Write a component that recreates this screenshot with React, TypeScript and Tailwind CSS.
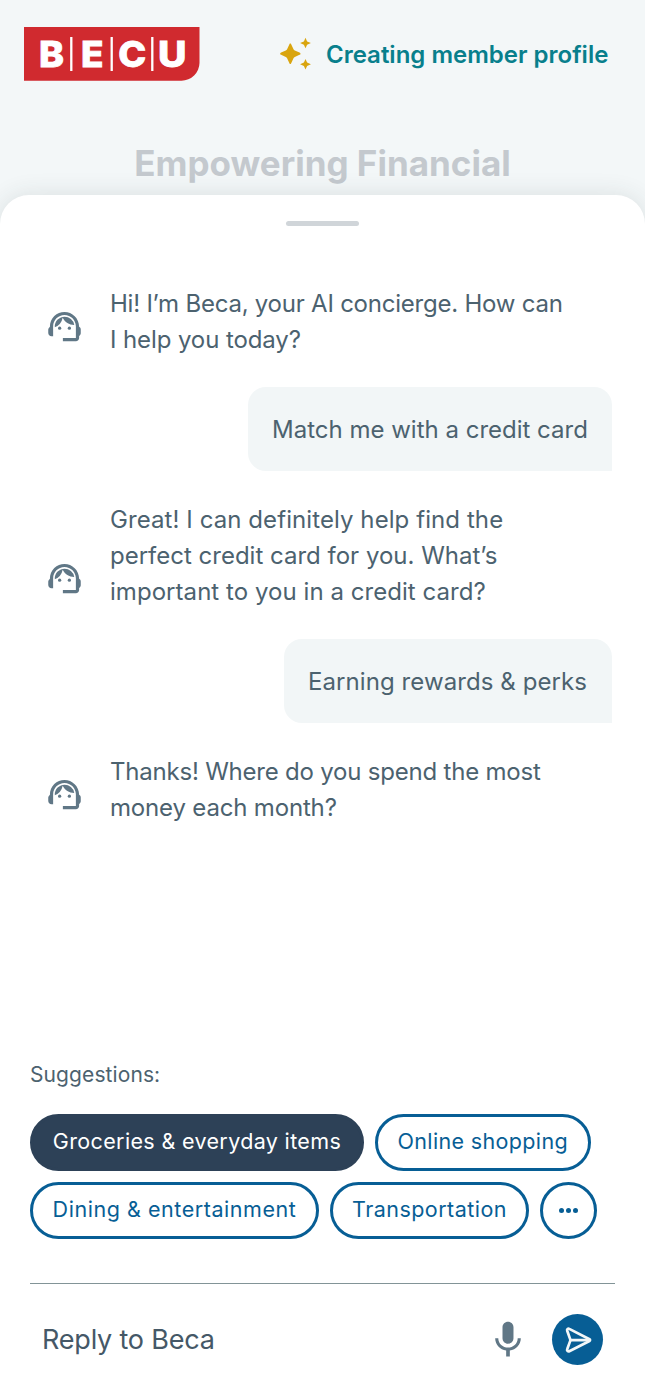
import { MdMic, MdSupportAgent } from "react-icons/md";

type Line = { text: string; tracking: string };

type Message = { from: "beca" | "member"; lines: Line[]; width?: string };

const messages: Message[] = [
  {
    from: "beca",
    lines: [
      { text: "Hi! I’m Beca, your AI concierge. How can", tracking: "tracking-[-0.23px]" },
      { text: "I help you today?", tracking: "tracking-[-0.1px]" },
    ],
  },
  {
    from: "member",
    width: "w-[364px]",
    lines: [{ text: "Match me with a credit card", tracking: "tracking-[0px]" }],
  },
  {
    from: "beca",
    lines: [
      { text: "Great! I can definitely help find the", tracking: "tracking-[0.08px]" },
      { text: "perfect credit card for you. What’s", tracking: "tracking-[0px]" },
      { text: "important to you in a credit card?", tracking: "tracking-[0.05px]" },
    ],
  },
  {
    from: "member",
    width: "w-[328px]",
    lines: [{ text: "Earning rewards & perks", tracking: "tracking-[0.08px]" }],
  },
  {
    from: "beca",
    lines: [
      { text: "Thanks! Where do you spend the most", tracking: "tracking-[-0.21px]" },
      { text: "money each month?", tracking: "tracking-[-0.17px]" },
    ],
  },
];

function Logo() {
  return (
    <svg width="176" height="54" viewBox="0 0 176 54" aria-label="BECU">
      <path d="M0 0h175.500v36a18 18 0 0 1-18 17.700H0z" fill="#d02a2f" />
      <g fill="#fff" fontFamily="Inter, sans-serif" fontWeight="800" fontSize="35.500" stroke="#fff" strokeWidth="0.800">
        <text x="15" y="39.800" textLength="25" lengthAdjust="spacingAndGlyphs">B</text>
        <text x="57" y="39.800" textLength="22.500" lengthAdjust="spacingAndGlyphs">E</text>
        <text x="94.300" y="39.800" textLength="28" lengthAdjust="spacingAndGlyphs">C</text>
        <text x="134" y="39.800" textLength="28.500" lengthAdjust="spacingAndGlyphs">U</text>
      </g>
      <path d="M47.300 10v34M87.700 10v34M128.300 10v34" stroke="#fff" strokeWidth="2.300" />
    </svg>
  );
}

function Sparkles() {
  return (
    <svg width="32" height="34" viewBox="0 0 32 34" fill="#d9a50f">
      <path d="M10.300 6.500c.6 0 .8.500 1 1l2.200 4.700c.3.600.7 1 1.300 1.300l4.700 2.100c.6.300 1 .5 1 1.100s-.4.800-1 1.100l-4.700 2.100c-.6.300-1 .7-1.300 1.300l-2.200 4.700c-.2.500-.4 1-1 1s-.8-.5-1-1l-2.200-4.700c-.3-.6-.7-1-1.300-1.300l-4.700-2.100c-.6-.3-1-.5-1-1.100s.4-.8 1-1.100l4.700-2.100c.6-.3 1-.7 1.300-1.300l2.200-4.700c.2-.5.4-1 1-1z" />
      <path d="M25.500.700l1.600 3.700 3.800 1.600-3.800 1.700-1.600 3.600-1.600-3.600L20.100 6l3.800-1.600z" />
      <path d="M25.500 21.900l1.600 3.700 3.800 1.600-3.800 1.700-1.600 3.600-1.600-3.600-3.800-1.700 3.800-1.600z" />
    </svg>
  );
}

function SendIcon() {
  return (
    <svg
      width="30"
      height="30"
      viewBox="0 0 30 30"
      fill="none"
      stroke="#f3f7f8"
      strokeWidth="2.700"
      strokeLinejoin="round"
      strokeLinecap="round"
    >
      <path d="M6.300 3.900 26.500 14.200a1 1 0 0 1 0 1.800L6.300 26.200a1.500 1.500 0 0 1-2.100-1.900L7.500 15.100 4.200 5.800a1.500 1.500 0 0 1 2.100-1.900z" />
      <path d="M7.500 15.100H26" />
    </svg>
  );
}

function ChatMessage({ message }: { message: Message }) {
  if (message.from === "member") {
    return (
      <div
        className={`mt-[29px] mb-[31px] ml-auto flex h-[84px] items-center rounded-[18px] rounded-br-none bg-[#f2f6f7] pt-0.5 pl-6 ${message.width}`}
      >
        {message.lines.map((line) => (
          <span key={line.text} className={`whitespace-nowrap ${line.tracking}`}>
            {line.text}
          </span>
        ))}
      </div>
    );
  }

  return (
    <div className="flex items-end">
      <MdSupportAgent className="mb-[12px] h-[39px] w-[39px] shrink-0 fill-[#607786]" />
      <div className="ml-[26px]">
        {message.lines.map((line) => (
          <p key={line.text} className={`whitespace-nowrap ${line.tracking}`}>
            {line.text}
          </p>
        ))}
      </div>
    </div>
  );
}

const pill =
  "flex h-[57px] items-center justify-center whitespace-nowrap rounded-full border-3";

export default function App() {
  return (
    <main className="flex h-[1397px] w-[645px] flex-col overflow-hidden bg-[#f3f7f8] font-['Inter',sans-serif] text-[#4c626f]">
      <header className="flex h-[108px] shrink-0 items-center pl-6">
        <Logo />
        <div className="ml-20 flex items-center">
          <Sparkles />
          <span className="ml-3.5 pt-0.5 whitespace-nowrap text-[24px] font-semibold text-[#087f8c]">
            Creating member profile
          </span>
        </div>
      </header>

      <h1 className="flex h-[87px] shrink-0 justify-center pt-[35px] text-[35px] leading-10 font-bold whitespace-nowrap text-[#c4c9ce]">
        Empowering Financial
      </h1>

      <section className="flex grow flex-col rounded-t-[29px] bg-white shadow-[0_0_24px_rgba(40,60,60,0.12)]">
        <div className="mx-auto mt-[26px] h-[5px] w-[73px] shrink-0 rounded-full bg-[#d0d5d9]" />

        <div className="mt-[60px] flex h-[763px] shrink-0 flex-col pr-[33px] pl-[45px] text-[24px] leading-9">
          {messages.map((message, i) => (
            <ChatMessage key={i} message={message} />
          ))}
        </div>

        <div className="flex flex-col px-[30px] pt-[11px] text-[21px] leading-[30px]">
          <p className="tracking-[0.1px]">Suggestions:</p>
          <div className="mt-6 flex gap-[11px] text-[21.5px]">
            <button className={`${pill} w-[334px] border-[#2d4157] bg-[#2d4157] pb-1 tracking-[0.35px] text-white`}>
              Groceries & everyday items
            </button>
            <button className={`${pill} w-[215.5px] border-[#075e95] pb-1 tracking-[0.35px] text-[#075e95]`}>
              Online shopping
            </button>
          </div>
          <div className="mt-[11px] flex gap-[11px] text-[21.5px]">
            <button className={`${pill} w-[289px] border-[#075e95] pb-1 tracking-[0.55px] text-[#075e95]`}>
              Dining & entertainment
            </button>
            <button className={`${pill} w-[199px] border-[#075e95] pb-1 tracking-[0.47px] text-[#075e95]`}>
              Transportation
            </button>
            <button aria-label="More suggestions" className={`${pill} w-[57px] gap-[2.4px] border-[#075e95]`}>
              <i className="h-[5px] w-[5px] rounded-full bg-[#075e95]" />
              <i className="h-[5px] w-[5px] rounded-full bg-[#075e95]" />
              <i className="h-[5px] w-[5px] rounded-full bg-[#075e95]" />
            </button>
          </div>
        </div>

        <div className="mx-[30px] mt-11 flex h-[113px] items-center border-t border-[#829497] pb-px pl-3">
          <span className="pt-0.5 text-[27px] tracking-[-0.2px] text-[#455867]">Reply to Beca</span>
          <MdMic className="ml-auto h-11 w-11 fill-[#607786]" />
          <button aria-label="Send" className="mr-3 ml-[22px] flex h-[51px] w-[51px] items-center justify-center rounded-full bg-[#075e95]">
            <SendIcon />
          </button>
        </div>
      </section>
    </main>
  );
}
